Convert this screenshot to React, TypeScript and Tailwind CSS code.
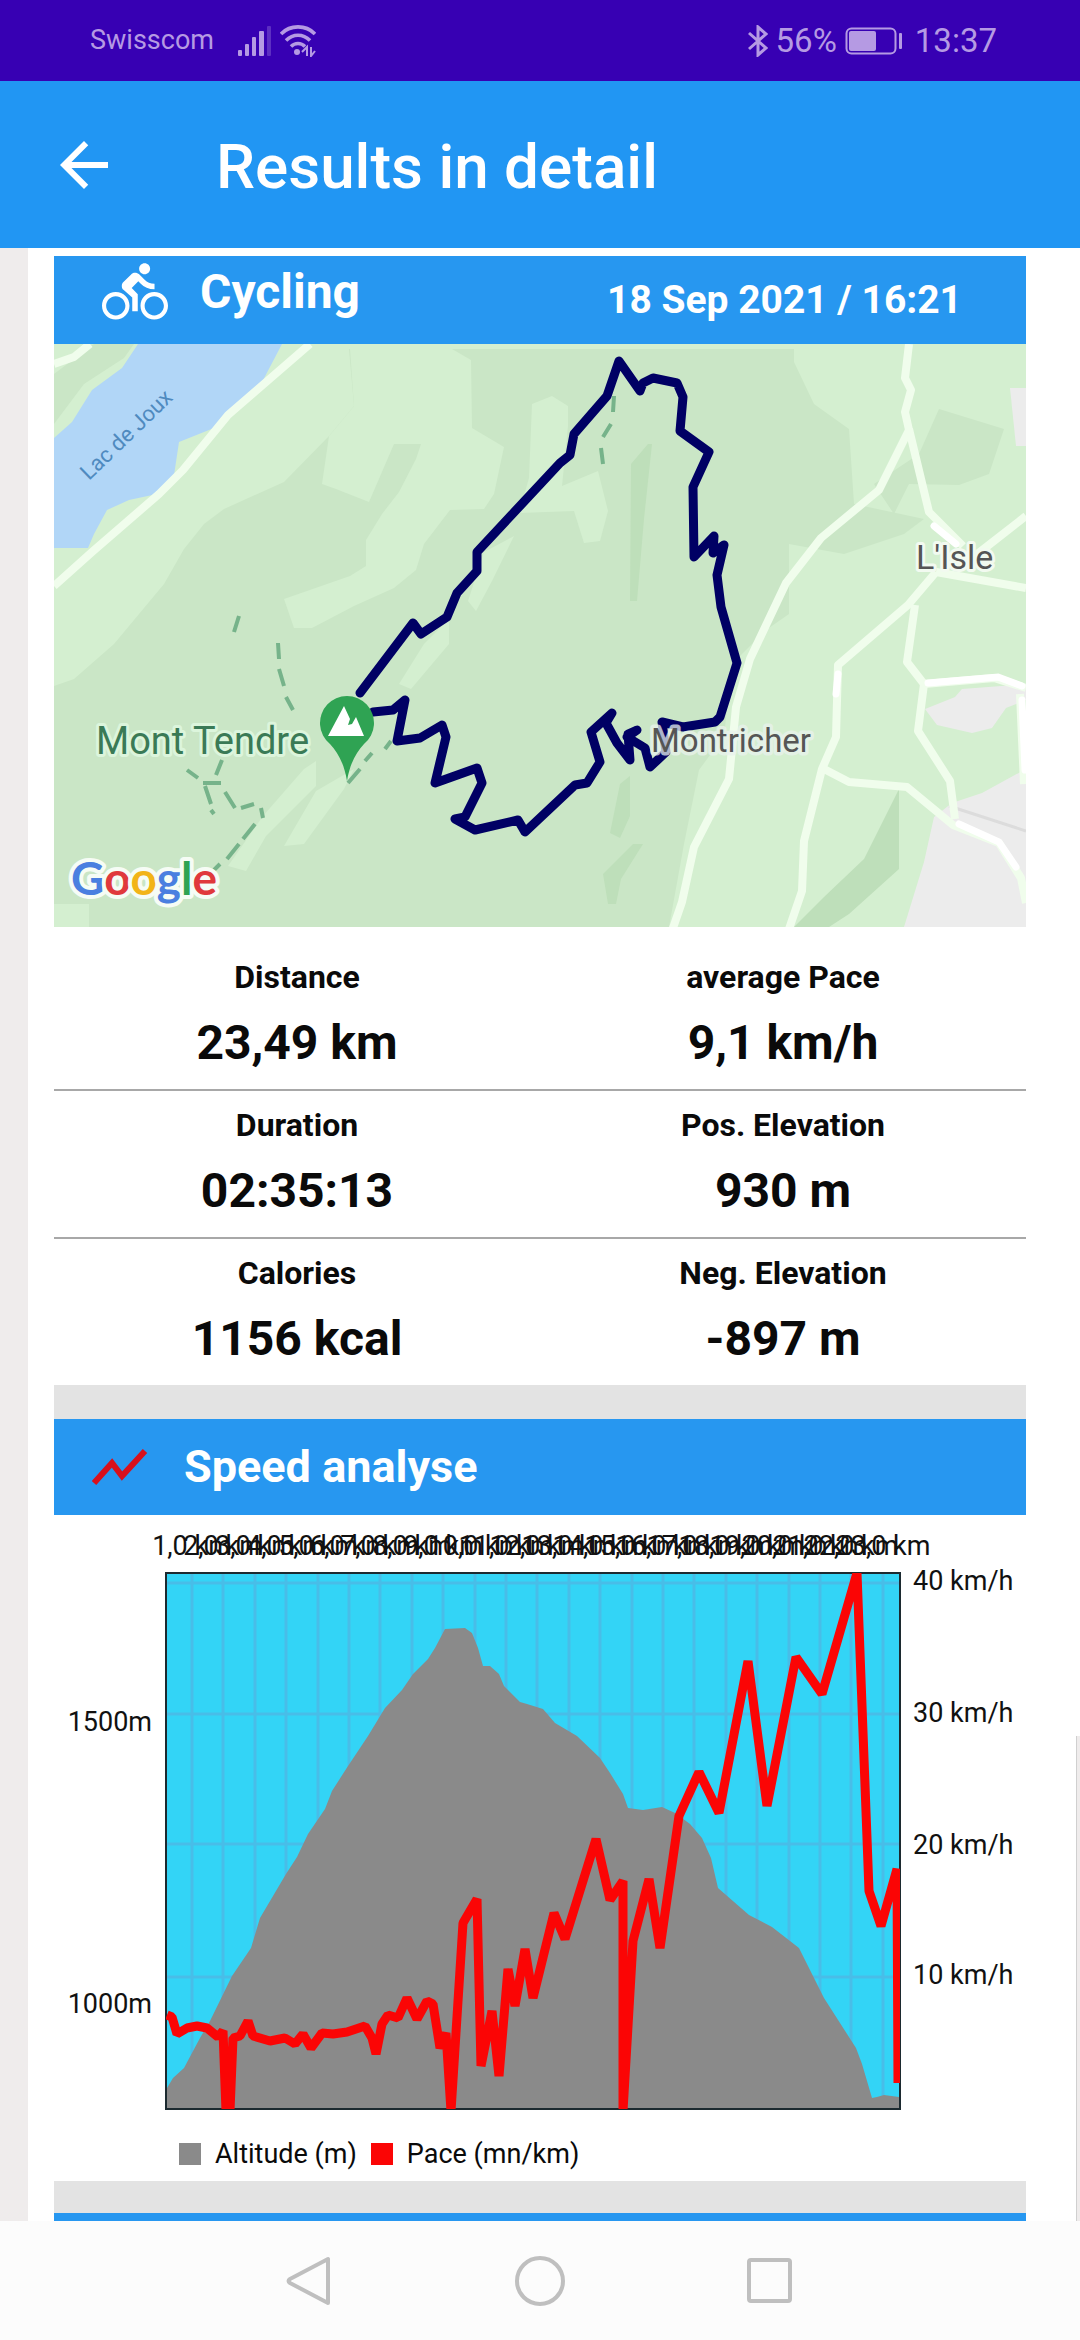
import { MdArrowBack, MdDirectionsBike } from "react-icons/md";

const stats = [
  { label: "Distance", value: "23,49 km" },
  { label: "average Pace", value: "9,1 km/h" },
  { label: "Duration", value: "02:35:13" },
  { label: "Pos. Elevation", value: "930 m" },
  { label: "Calories", value: "1156 kcal" },
  { label: "Neg. Elevation", value: "-897 m" },
];

const route =
  "306,349 359,279 367,290 393,273 403,249 423,227 423,208 506,119 516,111 520,90 553,52 565,17 586,47 589,39 599,34 623,39 629,53 626,87 655,108 639,143 640,213 660,192 659,209 670,201 663,231 667,263 683,319 666,373 661,378 629,383 608,378 612,408 596,423 591,404 573,393 583,386 574,390 576,416 563,399 552,379 558,369 537,388 546,418 533,439 521,441 471,488 464,476 421,486 401,475 411,473 428,439 423,424 381,439 392,393 388,381 366,394 343,397 351,356 339,366 319,368";

const altitude =
  "113,594 113,573 119,563 130,553 146,523 156,506 178,461 197,433 206,403 232,359 243,342 254,319 271,294 278,276 294,251 314,221 331,193 348,175 359,159 374,144 381,133 391,114 411,113 418,118 424,133 429,151 436,151 445,159 450,171 466,187 473,189 489,194 501,208 523,221 546,243 556,258 569,279 574,293 589,295 608,292 621,298 636,309 648,323 657,343 664,373 695,400 718,412 745,433 770,483 802,533 808,549 818,583 823,582 830,580 845,582 845,594";

const pace =
  "113,500 118,502 123,519 133,513 143,511 153,513 164,522 169,516 172,596 176,596 179,523 186,521 194,506 199,521 216,526 231,523 241,529 249,519 257,533 268,518 279,519 293,517 311,511 318,523 322,539 328,509 334,500 344,503 353,483 363,504 373,486 379,489 386,533 392,518 397,596 409,408 423,384 427,551 438,496 445,561 454,454 461,491 471,434 479,483 500,398 511,424 542,324 556,385 569,366 569,596 579,426 595,364 606,433 625,301 645,257 665,298 694,146 713,291 742,142 768,179 803,58 815,376 827,411 843,354 844,568";

const kilometres = Array.from({ length: 23 }, (_, i) => ({
  x: Math.round(138 + i * 31.4),
  label: `${i + 1},0 km`,
}));

const speedTicks = [
  { y: 68, textY: 75, label: "40 km/h" },
  { y: 199, textY: 207, label: "30 km/h" },
  { y: 329, textY: 339, label: "20 km/h" },
  { y: 462, textY: 469, label: "10 km/h" },
];

function StatusBar() {
  return (
    <div className="flex h-[81px] items-center justify-between bg-[#3700b3] pl-[90px] pr-[83px] text-[#b59ae3]">
      <div className="flex items-center">
        <span className="text-[27px]">Swisscom</span>
        <svg className="ml-6 h-8 w-[34px]" viewBox="0 0 34 32" fill="currentColor">
          <rect x="0" y="25" width="4" height="6" rx="1" />
          <rect x="7" y="19" width="4" height="12" rx="1" />
          <rect x="14" y="12" width="4" height="19" rx="1" />
          <rect x="21" y="6" width="5" height="25" rx="1" />
          <rect x="29" y="1" width="4" height="30" rx="1" opacity="0.3" />
        </svg>
        <svg className="ml-2 h-8 w-9" viewBox="0 0 36 32" fill="none" stroke="currentColor" strokeWidth="3.6">
          <path d="M1 9C10-.5 26-.5 35 9" />
          <path d="M6 15.5c7-7 17-7 24 0" />
          <path d="M11 21.500c4-4 10-4 14 0" />
          <circle cx="17" cy="27" r="3" fill="currentColor" stroke="none" />
          <path d="M22 27l5-5v9M31 22v9l4-5" strokeWidth="2" />
        </svg>
      </div>
      <div className="flex items-center">
        <svg className="h-8 w-5" viewBox="0 0 20 32" fill="none" stroke="currentColor" strokeWidth="3">
          <path d="M1 8l17 15-8 7V2l8 7L1 24" />
        </svg>
        <span className="ml-2 text-[33px]">56%</span>
        <svg className="ml-2 h-7 w-[58px]" viewBox="0 0 58 28">
          <rect x="1.500" y="1.500" width="49" height="25" rx="5" fill="none" stroke="currentColor" strokeWidth="2" />
          <rect x="4" y="4" width="27" height="20" rx="2" fill="currentColor" />
          <rect x="54" y="6" width="3" height="16" rx="1" fill="currentColor" />
        </svg>
        <span className="ml-3 text-[33px]">13:37</span>
      </div>
    </div>
  );
}

function RouteMap() {
  return (
    <svg className="block h-auto w-full" viewBox="0 0 972 583" role="img" aria-label="Route map">
      <rect width="972" height="583" fill="#d4efd0" />

      {/* Forest */}
      <g fill="#cae6c6">
        <path d="M295 5L300 62 275 92 230 138 170 165 150 180 130 205 110 240 85 270 60 300 20 335 0 342V583H615L630 500 645 426 670 392 678 320 712 286 735 270V200L790 210 850 190 870 175 800 160 795 85 760 60 740 18V5z" />
        <path d="M885 65L950 85 935 130 905 141 855 140 840 170 820 140 865 110z" />
        <path d="M0 80L30 40 70 14 80 0H40L0 30z" />
      </g>
      <g fill="#d4efd0">
        <path d="M296 5H398L417 16 418 84 450 103 440 150 430 165 396 166 370 200 362 226 340 244 300 262 258 284 240 284 230 255 296 232 312 222 312 196 328 170 345 148 362 115 367 100H340L315 158 282 145 268 140 275 92 300 62z" />
        <path d="M478 60l20-8 16 10v20l-6 60 36-15 10 40-8 30-16 2-10-32-55 2 10-35z" />
        <path d="M430 208l30-16-22 45-16 30-8-10zM395 275v25l-38 45-12-5 25-40z" />
        <path d="M250 425l12-8v25l-50 50-20 35-18-5 35-50zM300 425l-10 20-40 55-20 2 32-55zM0 560h35v23H0z" />
      </g>
      <g fill="#bedfba">
        <path d="M577 120l17-20h4l-8 75-7 82h-7zM566 440l10-8v40l-10 22-10-5zM549 530l30-30h10l-22 35-5 25h-8z" />
        <path d="M845 445v80l-50 45-20 13h-35l30-30 40-38z" />
      </g>

      {/* Lake and settlements */}
      <path d="M84 0H228l-22 42-36 38-45 18-6 40-16 12-28 6-22 10-13 24-6 14H0V94l18-16 20-32 30-22z" fill="#b1d6f7" />
      <g fill="#ececec">
        <path d="M956 44h16v58h-10zM908 345l64-5v16l-20 8-14 20-20 5-35-8-12-16 30-12zM972 425v158H850l20-65 10-45 18-14 30-10z" />
      </g>
      <path d="M895 462l77 25" stroke="#dcdcdc" strokeWidth="3" />

      {/* Roads */}
      <g fill="none" stroke="#f0fdec" strokeWidth="8" strokeLinejoin="round">
        <path d="M0 20l20-7L36 0M0 242l38-34 67-58 24-24 45-55L256 0" />
        <path d="M855 0l-4 34 6 12-6 22 4 18-30 60-58 48-35 45-36 76-14 48-7 72-35 68-12 55-18 52" />
        <path d="M855 85l20 83 34 34M972 172l-50 39M882 228l90 16M882 228l-28 33-70 60-2 72-14 32-18 72-2 50-13 38" />
        <path d="M861 261l-8 57 17 22 70-6 32 10M870 340l-6 47 32 50 5 38M770 425l25 13 58 5 46 38 46 18 22 35 5 25M966 350l4 90" />
      </g>
      <g fill="none" stroke="#fff" strokeWidth="7" strokeLinecap="round">
        <path d="M880 182l22 18M905 480l40 18 17 25M874 339l70-6 24 9M784 330l-2 20M968 356l3 70" />
      </g>

      {/* Hiking trails */}
      <path
        d="M185 272l-5 16M224 299l1 16M225 325l5 17M232 353l7 13M168 416l-6 15M133 426l11 8M149 439h18M151 442l6 18M157 466l3 4M171 448l10 16M187 464l13-4M207 464l2 10M201 480l-12 15M185 500l-12 15M166 520l-6 6M318 409l-7 8M306 425l-12 14M337 397l-6 8M560 52l-1 16M557 80l-8 13M547 104l2 16"
        fill="none"
        stroke="#76b38a"
        strokeWidth="4"
      />

      {/* Recorded track */}
      <polyline points={route} fill="none" stroke="#000064" strokeWidth="9" strokeLinejoin="round" strokeLinecap="round" />

      {/* Summit marker */}
      <path d="M293 437c-3-18-9-28-17-37a27 27 0 1 1 34 0c-8 9-14 19-17 37z" fill="#2fa353" />
      <path d="M274 392l16-30 6 13-2 6 4-1 4-7 8 19z" fill="#fff" />

      <g fontFamily="Roboto, sans-serif" strokeLinejoin="round">
        <text x="35" y="137" fontSize="22" fill="#4f8abf" transform="rotate(-44 35 137)">
          Lac de Joux
        </text>
        <text x="862" y="225" fontSize="34" fill="#555" stroke="#f2faf0" strokeWidth="6" style={{ paintOrder: "stroke" }}>
          L'Isle
        </text>
        <text x="42" y="410" fontSize="38" fill="#3a7a56" stroke="#dcf5dc" strokeWidth="6" style={{ paintOrder: "stroke" }}>
          Mont Tendre
        </text>
        <text x="597" y="408" fontSize="33" fill="#555" stroke="#e9f2ec" strokeOpacity="0.75" strokeWidth="7" style={{ paintOrder: "stroke" }}>
          Montricher
        </text>
      </g>

      {/* Google wordmark */}
      <text x="17" y="551" fontSize="46" fontFamily="Lato, sans-serif" fontWeight="700" stroke="#f6fcf5" strokeWidth="8" strokeLinejoin="round" style={{ paintOrder: "stroke" }}>
        <tspan fill="#4a7fe0">G</tspan>
        <tspan fill="#e0393c">o</tspan>
        <tspan fill="#f2b418">o</tspan>
        <tspan fill="#4a7fe0">g</tspan>
        <tspan fill="#2fa353">l</tspan>
        <tspan fill="#e0393c">e</tspan>
      </text>
    </svg>
  );
}

function SpeedChart() {
  return (
    <svg className="block h-auto w-full" viewBox="0 0 972 614" role="img" aria-label="Altitude and pace by distance">
      <defs>
        <clipPath id="plot">
          <rect x="112" y="58" width="734" height="536" />
        </clipPath>
      </defs>
      <g fontFamily="Roboto, sans-serif" fontSize="27" fill="#111">
        {kilometres.map((km) => (
          <text key={km.label} x={km.x} y="40" textAnchor="middle">
            {km.label}
          </text>
        ))}
        <text x="98" y="216" textAnchor="end">1500m</text>
        <text x="98" y="498" textAnchor="end">1000m</text>
        {speedTicks.map((tick) => (
          <text key={tick.label} x="859" y={tick.textY}>
            {tick.label}
          </text>
        ))}
      </g>

      <rect x="112" y="58" width="734" height="536" fill="#33d4f6" />
      <g stroke="#48bde8" strokeWidth="3">
        {kilometres.map((km) => (
          <line key={km.x} x1={km.x} x2={km.x} y1="58" y2="594" />
        ))}
        {speedTicks.map((tick) => (
          <line key={tick.y} x1="112" x2="846" y1={tick.y} y2={tick.y} />
        ))}
      </g>
      <polygon points={altitude} fill="#8a8a8a" />
      <rect x="112" y="58" width="734" height="536" fill="none" stroke="#1c2a30" strokeWidth="2" />
      <polyline points={pace} fill="none" stroke="#fb0505" strokeWidth="9" strokeLinejoin="bevel" clipPath="url(#plot)" />
    </svg>
  );
}

function NavBar() {
  return (
    <nav className="flex h-[120px] shrink-0 items-center justify-center gap-[180px] bg-[#fcfcfc] text-[#bfbfbf]">
      <button type="button" aria-label="Back">
        <svg className="size-[50px]" viewBox="0 0 50 50" fill="none" stroke="currentColor" strokeWidth="4" strokeLinejoin="round">
          <path d="M43 3v44L5 27q-3-2 0-4z" />
        </svg>
      </button>
      <button type="button" aria-label="Home">
        <svg className="size-[50px]" viewBox="0 0 50 50" fill="none" stroke="currentColor" strokeWidth="4">
          <circle cx="25" cy="25" r="23" />
        </svg>
      </button>
      <button type="button" aria-label="Recent apps">
        <svg className="size-[50px]" viewBox="0 0 50 50" fill="none" stroke="currentColor" strokeWidth="4">
          <rect x="4" y="4" width="41" height="41" rx="2" />
        </svg>
      </button>
    </nav>
  );
}

export default function App() {
  return (
    <div className="flex min-h-screen flex-col bg-white font-['Roboto',sans-serif] text-[#0a0a0a]">
      <StatusBar />
      <header className="flex h-[167px] items-center bg-[#2196f3] pl-12 text-white">
        <button type="button" aria-label="Go back">
          <MdArrowBack size={72} />
        </button>
        <h1 className="ml-24 pt-1 text-[62px] font-medium">Results in detail</h1>
      </header>

      <div className="relative flex grow flex-col border-l-[28px] border-[#efecec] pl-[26px] pr-[54px] pt-2">
        <section>
          <div className="flex h-[88px] items-center justify-between bg-[#2797f0] pl-12 pr-16 text-white">
            <div className="flex items-center gap-8 pb-4">
              <MdDirectionsBike size={66} />
              <h2 className="text-[48px] font-bold">Cycling</h2>
            </div>
            <time className="text-[39px] font-bold" dateTime="2021-09-18T16:21">
              18 Sep 2021 / 16:21
            </time>
          </div>
          <RouteMap />
          <dl className="grid grid-cols-2 pt-4 text-center">
            {stats.map((stat) => (
              <div
                key={stat.label}
                className="border-b-2 border-[#a8a8a8] pb-[18px] pt-[14px] nth-last-[-n+2]:border-b-0"
              >
                <dt className="text-[32px] font-bold leading-10">{stat.label}</dt>
                <dd className="mt-[18px] text-[48px] font-bold leading-[56px]">{stat.value}</dd>
              </div>
            ))}
          </dl>
        </section>

        <div className="h-[34px] bg-[#e3e3e3]" />

        <section>
          <div className="flex h-24 items-center gap-9 bg-[#2797f0] pl-[38px] text-white">
            <svg className="h-9 w-14" viewBox="0 0 56 36" fill="none" stroke="#d8101c" strokeWidth="6">
              <path d="M2 34l18-20 10 13L53 2" />
            </svg>
            <h2 className="text-[45px] font-bold">Speed analyse</h2>
          </div>
          <SpeedChart />
          <div className="flex h-[52px] items-start gap-[14px] pl-[125px] text-[27px] leading-[50px]">
            <div className="flex items-center gap-[14px]">
              <span className="size-[22px] bg-[#8a8a8a]" />
              Altitude (m)
            </div>
            <div className="flex items-center gap-[14px]">
              <span className="size-[22px] bg-[#fb0505]" />
              Pace (mn/km)
            </div>
          </div>
        </section>

        <div className="h-8 bg-[#e3e3e3]" />
        <div className="min-h-2 grow bg-[#2797f0]" />

        {/* Scroll indicator */}
        <div className="absolute bottom-0 right-0 h-[485px] w-1 border-l border-[#d0d0d0] bg-[#efecec]" />
      </div>

      <NavBar />
    </div>
  );
}
